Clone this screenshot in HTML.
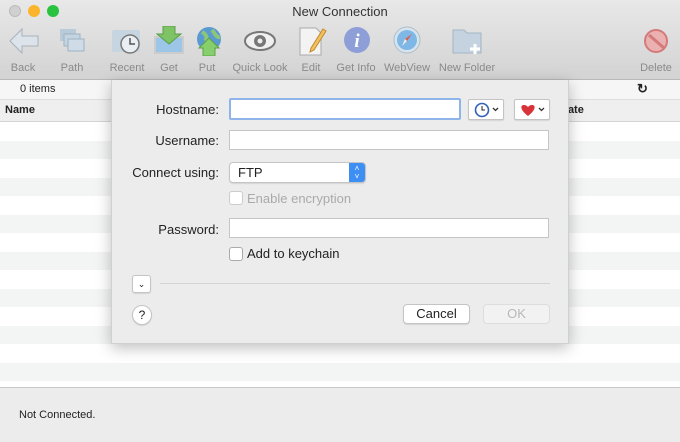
<!DOCTYPE html>
<html><head><meta charset="utf-8"><style>
*{box-sizing:border-box;margin:0;padding:0}
body{width:680px;height:442px;overflow:hidden;font-family:"Liberation Sans",Helvetica,sans-serif;background:#fff;position:relative;font-size:12px;color:#222}
.tb{position:absolute;left:0;top:0;width:680px;height:80px;background:linear-gradient(#e8e8e8,#d3d3d3);border-bottom:1px solid #b8b8b8}
.title{position:absolute;top:4px;width:100%;text-align:center;font-size:13px;color:#333}
.dot{position:absolute;top:5px;width:12px;height:12px;border-radius:50%}
.it{position:absolute;top:62px;font-size:11px;color:#8a8a8a;text-align:center;transform:translateX(-50%);white-space:nowrap}
.ic{position:absolute;top:26px}
.sub{position:absolute;top:80px;left:0;width:680px;height:20px;background:#f6f6f6;border-bottom:1px solid #ddd}
.hdr{position:absolute;top:100px;left:0;width:680px;height:22px;background:#efefef;border-bottom:1px solid #d4d4d4;font-size:11px;font-weight:bold}
.row{position:absolute;left:0;width:680px;height:18px;background:#f3f4f4}
.status{position:absolute;top:387px;left:0;width:680px;height:55px;background:#ececec;border-top:1px solid #c8c8c8}
.dlg{position:absolute;left:111px;top:80px;width:458px;height:264px;background:#ececec;box-shadow:0 4px 14px rgba(0,0,0,.25);border:1px solid #d0d0d0;border-top:none}
.lbl{position:absolute;right:349px;font-size:13px;color:#222;text-align:right;white-space:nowrap}
.fld{position:absolute;left:117px;width:320px;height:20px;background:#fff;border:1px solid #c5c5c5}
.btn{position:absolute;background:#fff;border:1px solid #c4c4c4;border-radius:4px;box-shadow:0 1px 1px rgba(0,0,0,.1);font-size:13px;text-align:center}
.cb{position:absolute;left:117px;width:14px;height:14px;background:#fff;border:1px solid #aaa;border-radius:3px}
</style></head><body>
<div class="tb">
<div class="dot" style="left:9px;background:#d0d0d0;border:1px solid #bbb"></div>
<div class="dot" style="left:28px;background:#fbb42c"></div>
<div class="dot" style="left:47px;background:#2ac33f"></div>
<div class="title">New Connection</div>
<svg class="ic" style="left:8px" width="32" height="30"><path d="M2 15 L14 3 V10 H30 V20 H14 V27Z" fill="#dde3ea" stroke="#a7b2bd"/></svg>
<svg class="ic" style="left:58px" width="30" height="30"><rect x="2" y="3" width="16" height="12" fill="#b9cbd9"/><rect x="6" y="8" width="16" height="12" fill="#c4d4e0" stroke="#9fb2c2"/><rect x="10" y="13" width="16" height="12" fill="#cfdbe6" stroke="#9fb2c2"/></svg>
<svg class="ic" style="left:111px" width="32" height="30"><rect x="1" y="4" width="28" height="22" rx="2" fill="#c7d5e0"/><circle cx="19" cy="18" r="9" fill="#e9eef2" stroke="#777" stroke-width="1.5"/><path d="M19 12v6h5" stroke="#555" fill="none" stroke-width="1.5"/></svg>
<svg class="ic" style="left:153px" width="32" height="30"><rect x="1" y="10" width="30" height="18" fill="#ccc"/><rect x="3" y="12" width="26" height="14" fill="#9cc6e8"/><path d="M10 0h12v8h6L16 18 4 8h6z" fill="#7ec466" stroke="#5a9e46"/></svg>
<svg class="ic" style="left:194px" width="30" height="30"><circle cx="15" cy="13" r="12" fill="#5a9ad0"/><path d="M8 6c4 2 6 6 3 9M18 4c3 3 4 8 8 7" stroke="#8cc67a" stroke-width="4" fill="none"/><path d="M9 30v-8H5l10-10 10 10h-4v8z" fill="#86cf6c" stroke="#5da446"/></svg>
<svg class="ic" style="left:244px" width="32" height="30"><ellipse cx="16" cy="15" rx="15" ry="9" fill="#f0f0f0" stroke="#777" stroke-width="2"/><circle cx="16" cy="15" r="6" fill="#777"/><circle cx="16" cy="15" r="2.5" fill="#eee"/></svg>
<svg class="ic" style="left:297px" width="30" height="30"><path d="M3 2h16l5 5v22H3z" fill="#f3f3f3" stroke="#aaa"/><path d="M14 22l12-19 3 2-12 19-4 2z" fill="#f1c060" stroke="#c48a2a"/></svg>
<svg class="ic" style="left:343px" width="28" height="30"><circle cx="14" cy="14" r="13" fill="#8e9fd8"/><text x="14" y="21" font-family="Liberation Serif" font-style="italic" font-weight="bold" font-size="19" fill="#fff" text-anchor="middle">i</text></svg>
<svg class="ic" style="left:392px" width="30" height="30"><circle cx="15" cy="14" r="13" fill="#d8e4ec" stroke="#aebdca"/><circle cx="15" cy="14" r="10" fill="#7fb8e6"/><path d="M20 8l-7 5 2 2z" fill="#e05b4f"/><path d="M10 20l5-5-2-2z" fill="#eee"/></svg>
<svg class="ic" style="left:451px" width="34" height="30"><path d="M2 4h11l3 3h14v20H2z" fill="#c4d3df" stroke="#a5b6c4"/><path d="M24 18v10M19 23h10" stroke="#fff" stroke-width="3"/></svg>
<svg class="ic" style="left:642px" width="28" height="30"><circle cx="14" cy="15" r="11" fill="#ebb0b0" stroke="#d47a7a" stroke-width="2"/><path d="M7 9l15 13" stroke="#d47a7a" stroke-width="3"/></svg>
<div class="it" style="left:23px">Back</div><div class="it" style="left:72px">Path</div><div class="it" style="left:127px">Recent</div><div class="it" style="left:169px">Get</div><div class="it" style="left:207px">Put</div><div class="it" style="left:260px">Quick Look</div><div class="it" style="left:311px">Edit</div><div class="it" style="left:356px">Get Info</div><div class="it" style="left:407px">WebView</div><div class="it" style="left:467px">New Folder</div><div class="it" style="left:656px">Delete</div>
</div>
<div class="sub"><span style="position:absolute;left:20px;top:3px;font-size:11px">0 items</span><span style="position:absolute;left:637px;top:1px;font-size:13px;font-weight:bold">↻</span></div>
<div class="hdr"><span style="position:absolute;left:5px;top:4px">Name</span><span style="position:absolute;left:560px;top:4px">Date</span></div>
<div class="row" style="top:141px"></div><div class="row" style="top:178px"></div><div class="row" style="top:215px"></div><div class="row" style="top:252px"></div><div class="row" style="top:289px"></div><div class="row" style="top:326px"></div><div class="row" style="top:363px"></div>
<div class="status"><span style="position:absolute;left:19px;top:21px;font-size:11px">Not Connected.</span></div>
<div class="dlg">
<div class="lbl" style="top:22px">Hostname:</div>
<div class="fld" style="top:18px;width:232px;height:22px;border:2.5px solid #8fb4ea;border-radius:2px"></div>
<div class="btn" style="left:356px;top:19px;width:36px;height:21px;border-radius:2px"><svg width="34" height="19"><circle cx="13" cy="10" r="6.5" fill="#fff" stroke="#2f62b8" stroke-width="1.6"/><path d="M13 6v4h3" stroke="#222" fill="none"/><path d="M24 8l2.5 2.5L29 8" stroke="#333" fill="none" stroke-width="1.3"/></svg></div>
<div class="btn" style="left:402px;top:19px;width:36px;height:21px;border-radius:2px"><svg width="34" height="19"><path d="M13 16C5 10 5 5 9 5c2 0 3 1 4 2 1-1 2-2 4-2 4 0 4 5-4 11z" fill="#d8333a"/><path d="M24 8l2.5 2.5L29 8" stroke="#333" fill="none" stroke-width="1.3"/></svg></div>
<div class="lbl" style="top:53px">Username:</div>
<div class="fld" style="top:50px"></div>
<div class="lbl" style="top:85px">Connect using:</div>
<div class="btn" style="left:117px;top:82px;width:137px;height:21px;text-align:left;padding:2px 0 0 8px;border-radius:4px;overflow:hidden">FTP<div style="position:absolute;right:0;top:0;width:16px;height:21px;background:#3d8ff4;color:#fff;font-size:8px;line-height:8px;padding-top:2px;text-align:center">˄<br>˅</div></div>
<div class="cb" style="top:111px;border-color:#ccc"></div>
<div style="position:absolute;left:135px;top:111px;font-size:13px;color:#aaa">Enable encryption</div>
<div class="lbl" style="top:142px">Password:</div>
<div class="fld" style="top:138px"></div>
<div class="cb" style="top:167px"></div>
<div style="position:absolute;left:135px;top:166px;font-size:13px">Add to keychain</div>
<div class="btn" style="left:20px;top:195px;width:19px;height:18px;font-size:9px;line-height:16px;border-radius:3px">⌄</div>
<div style="position:absolute;left:48px;top:203px;width:390px;height:1px;background:#d4d4d4"></div>
<div class="btn" style="left:20px;top:225px;width:20px;height:20px;border-radius:50%;font-size:12px;line-height:18px">?</div>
<div class="btn" style="left:291px;top:224px;width:67px;height:20px;line-height:18px">Cancel</div>
<div class="btn" style="left:371px;top:224px;width:67px;height:20px;line-height:18px;background:#f2f2f2;color:#b8b8b8;border-color:#ddd;box-shadow:none">OK</div>
</div>
</body></html>
